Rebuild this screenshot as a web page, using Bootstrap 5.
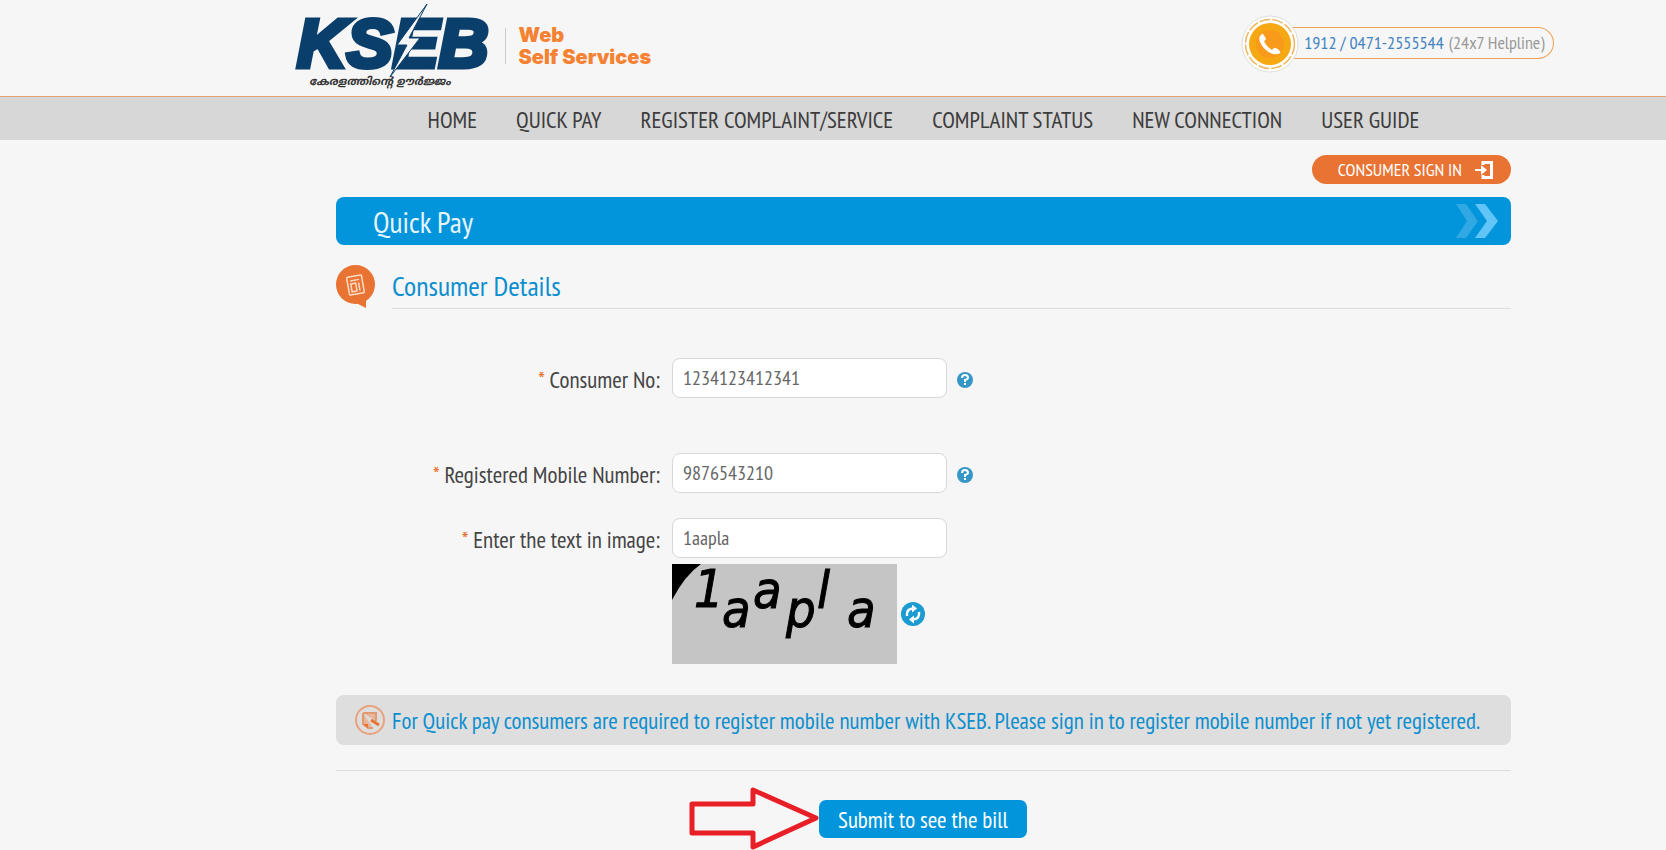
<!DOCTYPE html>
<html lang="en">
<head>
<meta charset="utf-8">
<meta name="viewport" content="width=device-width, initial-scale=1">
<title>KSEB Web Self Services - Quick Pay</title>
<link href="https://cdn.jsdelivr.net/npm/bootstrap@5.3.0/dist/css/bootstrap.min.css" rel="stylesheet">
<style>
body{font-family:"PT Sans Narrow","Liberation Sans Narrow","Liberation Sans",sans-serif;background:#f6f6f6;color:#444;font-size:23px;line-height:28px}
a{text-decoration:none}
svg{overflow:visible}
.indent{padding-left:181px}
.head-wrap{max-width:1260px;height:96px}
.page-wrap{max-width:1175px}
.tagline{font:900 20px/22px Inter,"Liberation Sans",sans-serif;color:#f58233;border-left:1px solid #ccc;padding-left:13px;margin-left:15px;height:36px}
.tagline span{display:block;margin-top:-4px}
.tagline span + span{margin-top:0}
.helpline{height:32px;border:1px solid #efa055;border-left:0;border-radius:0 16px 16px 0;padding:0 8px 0 55px;font-size:18px;color:#999;margin-top:27px;gap:5px}
.helpline a{color:#4383c1}
.helpline svg{position:absolute;left:-8px;top:-13px}
.main-nav{background:#d7d7d7;border-top:1px solid #e2a073;height:44px}
.main-nav .nav-link{color:#3c3c3c;padding:2px 0 0}
.menu-list{gap:39px}
.signin-row{padding-top:15px}
.signin{background:#e87332;color:#fff;border-radius:15px;height:29px;padding:0 17px 0 26px;font-size:18px;gap:13px}
.signin:hover{color:#fff}
.title-bar{background:#0295db;border-radius:8px;height:48px;color:#e6f4fc;padding:0 13px 0 37px;margin-top:13px}
.title-bar h1{font-size:30px;line-height:36px;margin:0;padding-top:2px;font-weight:400}
.section-head{margin-top:20px;gap:17px}
.section-head h2{font-size:28px;line-height:36px;font-weight:400;color:#0c8ecf;border-bottom:1px solid #ddd;height:44px;padding-top:3px;margin:0}
.label-col{width:324px;padding-top:3px}
.label-col i{color:#e87332;font-style:normal}
.field{width:275px;height:40px;border:1px solid #d8d8d8;border-radius:8px;background:#fff;color:#666;font-size:20px;padding:0 10px;margin:0 8px 0 12px}
.form-area{margin-top:49px}
.gap-large{margin-top:55px}
.gap-small{margin-top:25px}
.captcha-row{margin:6px 0 0 336px}
.plain{border:0;background:none;padding:0;line-height:0}
.info{background:#dedede;border-radius:8px;height:50px;margin-top:31px;padding:0 19px;gap:7px;color:#0c8ecf}
.info span{padding-top:2px}
.rule{border-top:1px solid #ddd;margin-top:25px}
.submit-btn{background:#0295db;color:#fff;border:0;border-radius:7px;height:38px;width:208px;padding:2px 0 0}
.submit-row{margin-top:16px;padding-left:353px}
</style>
</head>
<body>
<header class="indent">
 <div class="head-wrap mx-auto d-flex justify-content-between align-items-start">
  <div class="d-flex align-items-center">
   <svg width="196" height="92" viewBox="0 0 196 92" role="img" aria-label="KSEB">
    <text x="3" y="67" font-family="Liberation Sans" font-weight="700" font-style="italic" font-size="69" fill="#0b3f6b" stroke="#0b3f6b" stroke-width="5">KSEB</text>
    <path d="M133 4L103 45L113 45L96 77L126 38L115 38Z" fill="#f6f6f6" stroke="#0b3f6b" stroke-width="1"/>
    <text x="15" y="85" font-family="Noto Sans Malayalam, Noto Sans, sans-serif" font-weight="700" font-style="italic" font-size="11" fill="#333">കേരളത്തിന്റെ ഊർജ്ജം</text>
   </svg>
   <div class="tagline"><span>Web</span><span>Self Services</span></div>
  </div>
  <div class="helpline position-relative d-flex align-items-center">
   <svg width="58" height="58" viewBox="0 0 58 58" aria-hidden="true">
    <circle cx="29" cy="29" r="28" fill="#fff" stroke="#dedede"/>
    <circle cx="29" cy="29" r="24.500" fill="none" stroke="#efb65a" stroke-width="1.500" stroke-dasharray="11 2"/>
    <circle cx="29" cy="29" r="21" fill="#f5a812"/><circle cx="29" cy="29" r="14" fill="#f99a1c"/>
    <path d="M20 20q-3 2-1 7q4 9 13 12q5 1 7-1q1-1-1-3l-3-2q-2-1-4 2q-6-4-8-9q3-1 1-4l-2-3q-1-1-2 1z" fill="#fff"/>
   </svg>
   <a href="#">1912 / 0471-2555544</a><span>(24x7 Helpline)</span>
  </div>
 </div>
</header>
<nav class="main-nav indent d-flex align-items-center justify-content-center">
 <ul class="nav menu-list flex-nowrap text-nowrap">
  <li><a class="nav-link" href="#">HOME</a></li><li><a class="nav-link" href="#">QUICK PAY</a></li><li><a class="nav-link" href="#">REGISTER COMPLAINT/SERVICE</a></li><li><a class="nav-link" href="#">COMPLAINT STATUS</a></li><li><a class="nav-link" href="#">NEW CONNECTION</a></li><li><a class="nav-link" href="#">USER GUIDE</a></li>
 </ul>
</nav>
<main class="indent">
 <div class="page-wrap mx-auto">
  <div class="signin-row d-flex justify-content-end">
   <a class="signin d-flex align-items-center" href="#">CONSUMER SIGN IN
    <svg width="19" height="20" viewBox="0 0 19 20" aria-hidden="true"><path d="M8 5V2.500H16.500V17.500H8V15" fill="none" stroke="#fff" stroke-width="3"/><path d="M0 9H6V5L12 10L6 15V11H0Z" fill="#fff"/></svg>
   </a>
  </div>
  <div class="title-bar d-flex align-items-center justify-content-between">
   <h1>Quick Pay</h1>
   <svg width="42" height="34" viewBox="0 0 42 34" aria-hidden="true"><path d="M0 0H10L22 17L10 34H0L11 17Z" fill="#2fa8e4"/><path d="M19 0H29L42 17L29 34H19L31 17Z" fill="#62c5f8"/></svg>
  </div>
  <div class="section-head d-flex">
   <svg width="39" height="44" viewBox="0 0 39 44" aria-hidden="true"><circle cx="19.500" cy="19.500" r="19.500" fill="#e87332"/><path d="M20 38L30 43V34Z" fill="#e87332"/>
    <g transform="rotate(-10 20 20)" fill="none" stroke="#fbdcc8" stroke-width="1.500"><rect x="12" y="11" width="15" height="18" rx="1"/><path d="M15 15H24M15 18H20V26H15ZM23 18V26"/></g></svg>
   <h2 class="flex-grow-1">Consumer Details</h2>
  </div>
  <form class="form-area" onsubmit="return false">
   <div class="d-flex align-items-center">
    <label class="label-col text-end" for="consumer"><i>*</i> Consumer No:</label>
    <input class="field" id="consumer" type="text" value="1234123412341">
    <button class="plain" type="button" aria-label="Help"><svg width="20" height="20" viewBox="0 0 20 20"><circle cx="10" cy="12" r="8" fill="#3597c8"/><path d="M7 10Q7 7 10 7T13 10Q13 11 10 12V14M10 15V17" fill="none" stroke="#fff" stroke-width="2"/></svg></button>
   </div>
   <div class="d-flex align-items-center gap-large">
    <label class="label-col text-end" for="mobile"><i>*</i> Registered Mobile Number:</label>
    <input class="field" id="mobile" type="text" value="9876543210">
    <button class="plain" type="button" aria-label="Help"><svg width="20" height="20" viewBox="0 0 20 20"><circle cx="10" cy="12" r="8" fill="#3597c8"/><path d="M7 10Q7 7 10 7T13 10Q13 11 10 12V14M10 15V17" fill="none" stroke="#fff" stroke-width="2"/></svg></button>
   </div>
   <div class="d-flex align-items-center gap-small">
    <label class="label-col text-end" for="code"><i>*</i> Enter the text in image:</label>
    <input class="field" id="code" type="text" value="1aapla">
   </div>
   <div class="captcha-row d-flex align-items-center gap-1">
    <svg width="225" height="100" viewBox="0 0 225 100" role="img" aria-label="Verification image"><rect width="225" height="100" fill="#c5c5c5"/><path d="M0 0H29Q13 11 0 36Z"/>
     <g font-family="DejaVu Sans Condensed, DejaVu Sans" font-style="italic" font-size="52" stroke="#000" stroke-width="1"><text x="22" y="43">1</text><text x="50" y="63">a</text><text x="81" y="44">a</text><text x="114" y="63">p</text><text x="145" y="44">l</text><text x="175" y="63">a</text></g></svg>
    <button class="plain" type="button" aria-label="Refresh image"><svg width="24" height="24" viewBox="0 0 24 24"><circle cx="12" cy="12" r="12" fill="#1b9bd1"/><path d="M6 14Q5 7 12 6.500M18 10Q19 17 12 17.500" fill="none" stroke="#fff" stroke-width="2.500"/><path d="M11 2.500L16 6.500L11 10.500ZM13 13.500L8 17.500L13 21.500Z" fill="#fff"/></svg></button>
   </div>
   <div class="info d-flex align-items-center text-nowrap">
    <svg width="30" height="30" viewBox="0 0 30 30" aria-hidden="true"><circle cx="15" cy="15" r="14" fill="none" stroke="#e8a27c" stroke-width="2"/><path d="M8 8H21V16M8 8V19L13 23H18" fill="#e6b79c" stroke="#e3996f" stroke-width="2"/><path d="M8 19L13 23V19Z" fill="#e87332"/><path d="M16 15L24 20" stroke="#e87332" stroke-width="3"/></svg>
    <span>For Quick pay consumers are required to register mobile number with KSEB. Please sign in to register mobile number if not yet registered.</span>
   </div>
   <div class="rule"></div>
   <div class="submit-row d-flex align-items-center">
    <svg width="130" height="63" viewBox="0 0 130 63" aria-hidden="true"><path d="M3 17H64V3L127 31L64 60V46H3Z" fill="none" stroke="#e91f27" stroke-width="5" stroke-linejoin="round"/></svg>
    <button class="submit-btn" type="submit">Submit to see the bill</button>
   </div>
  </form>
 </div>
</main>
<script src="https://cdn.jsdelivr.net/npm/bootstrap@5.3.0/dist/js/bootstrap.bundle.min.js"></script>
</body>
</html>
